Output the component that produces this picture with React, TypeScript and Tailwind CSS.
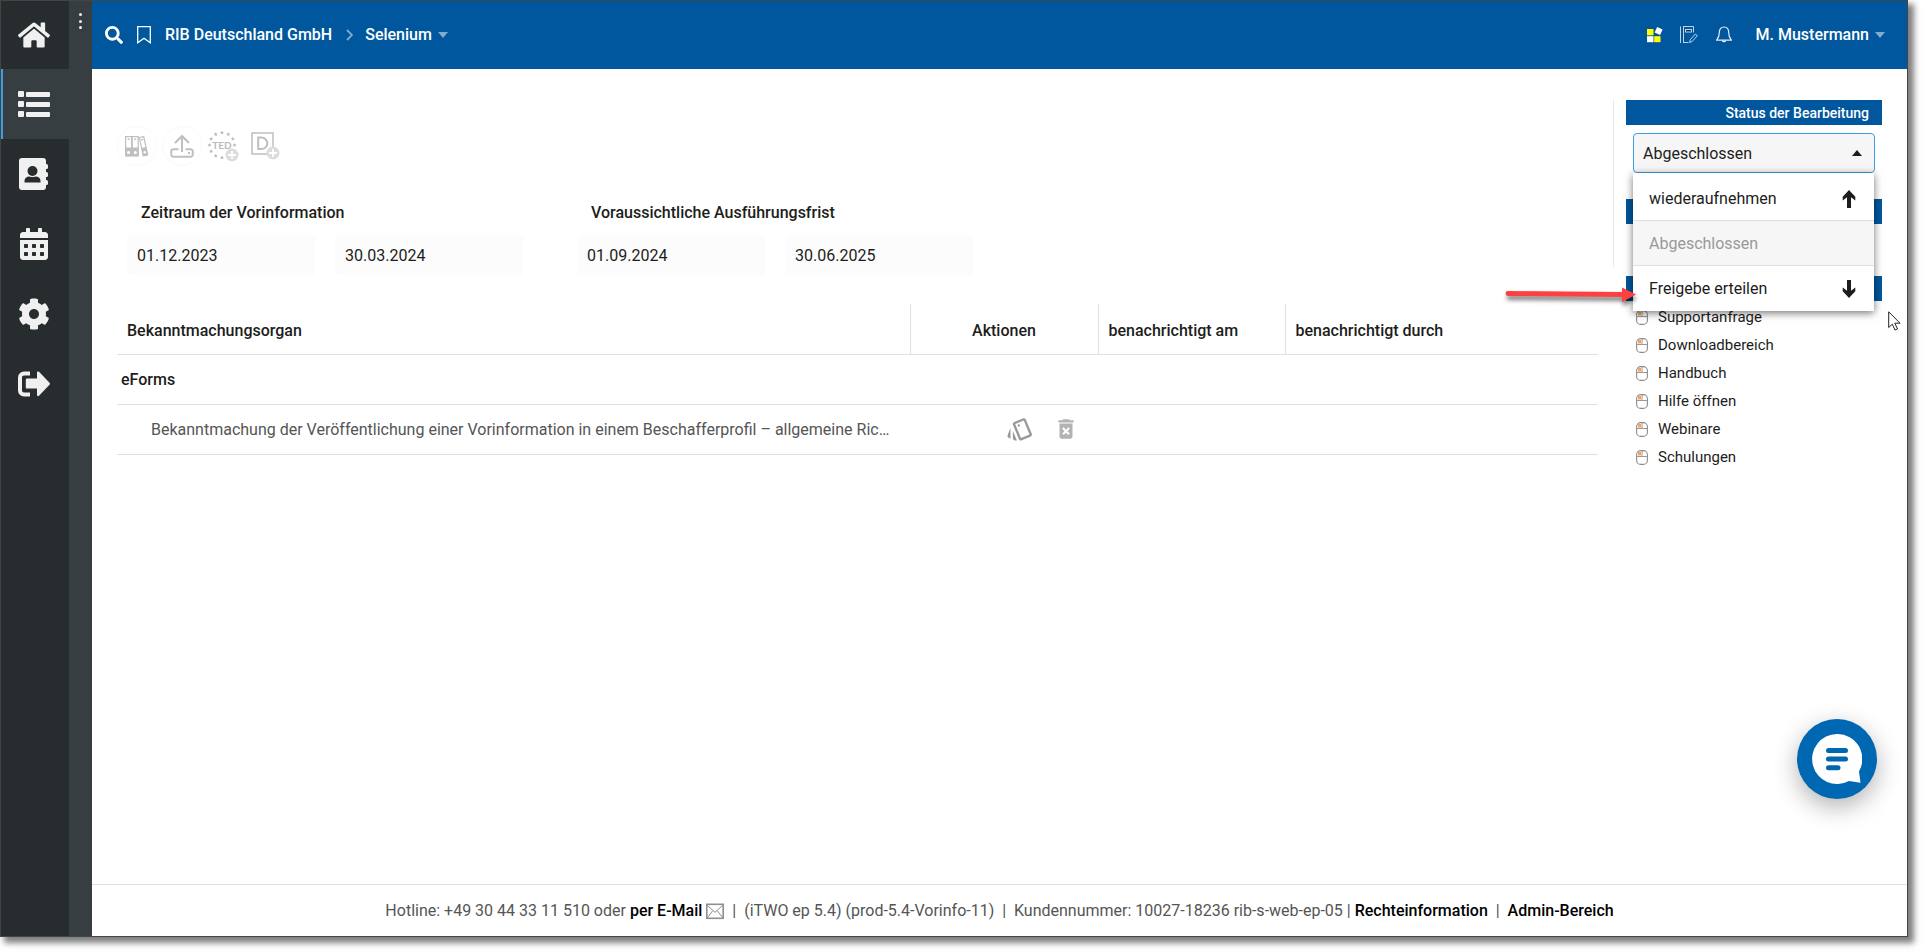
import { useState } from 'react';
import type { ReactNode } from 'react';
import { FaHome, FaCalendarAlt, FaCog, FaSearch } from 'react-icons/fa';
import { MdDeleteForever, MdOutlineStyle } from 'react-icons/md';

/* ---------- Icons ---------- */

function ListIcon() {
  return (
    <svg width="32" height="28" viewBox="0 0 32 28" fill="currentColor">
      {[1, 11, 21].map((y) => (
        <g key={y}>
          <rect x="0" y={y} width="6" height="6" rx="1" />
          <rect x="8" y={y + 1} width="24" height="5" rx="1" />
        </g>
      ))}
    </svg>
  );
}

function ContactsIcon() {
  return (
    <svg width="30" height="32" viewBox="0 0 30 32">
      <rect x="24" y="6" width="5" height="5" rx="1.5" fill="currentColor" />
      <rect x="24" y="14" width="5" height="5" rx="1.5" fill="currentColor" />
      <rect x="24" y="22" width="5" height="5" rx="1.5" fill="currentColor" />
      <rect x="0" y="0" width="27" height="32" rx="3" fill="currentColor" />
      <circle cx="13.5" cy="13" r="5" fill="#272c2e" />
      <path d="M5.500 24.500v-1.500c0-3 2-4.500 5-4.500 2 .8 4 .8 6 0 3 0 5 1.500 5 4.500v1.500z" fill="#272c2e" />
    </svg>
  );
}

function LogoutIcon() {
  return (
    <svg width="32" height="26" viewBox="0 0 32 26">
      <path d="M12 2.500H6a4 4 0 0 0-4 4v13a4 4 0 0 0 4 4h6" fill="none" stroke="currentColor" strokeWidth="4" />
      <path d="M9 7.500h10V1.500c0-1 1.200-1.500 2-.7l10.500 11c.6.700.6 1.400 0 2L21 24.800c-.8.800-2 .3-2-.7v-6.500H9a1.200 1.200 0 0 1-1.200-1.200V8.700A1.200 1.200 0 0 1 9 7.500z" fill="currentColor" />
    </svg>
  );
}

function BookmarkIcon() {
  return (
    <svg width="14" height="18" viewBox="0 0 14 18" fill="none" stroke="currentColor" strokeWidth="1.300">
      <path d="M.7.7h12.600v16L7 12.200.7 16.700z" />
    </svg>
  );
}

function AppsIcon() {
  return (
    <svg width="16" height="16" viewBox="0 0 16 16">
      <rect x="0" y="2" width="6.500" height="6.300" fill="#ffff00" />
      <rect x="0" y="9.200" width="6.500" height="6" fill="#fff" />
      <rect x="7.200" y="9.200" width="6.300" height="6" fill="#ffff00" />
      <rect x="8.600" y="1" width="6" height="6" fill="#fff" transform="rotate(25 11.600 4)" />
    </svg>
  );
}

function NotebookIcon() {
  return (
    <svg width="18" height="18" viewBox="0 0 18 18" fill="none" stroke="#bcd3e8" strokeWidth="1">
      <path d="M.5.500v16.500M3.500 0v17M3.500.500h10v6M3.500 16.500h5" />
      <rect x="5.500" y="3.500" width="6" height="2.500" fill="#00365f" />
      <path d="M9.500 16.500l.8-2.800 5-5.700 2 1.700-5.200 5.800z" />
    </svg>
  );
}

function BellIcon() {
  return (
    <svg width="16" height="18" viewBox="0 0 16 18" fill="none" stroke="#e4edf5" strokeWidth="1.200">
      <path d="M8 1C4.800 1 3.300 3.500 3.300 6.500c0 4-1.200 6-2.600 7.700h14.600c-1.400-1.700-2.600-3.700-2.600-7.700C12.700 3.500 11.200 1 8 1z" />
      <path d="M6.300 14.500a1.800 1.800 0 0 0 3.400 0" />
    </svg>
  );
}

function Caret({ className, up }: { className?: string; up?: boolean }) {
  return (
    <svg width="10" height="6" viewBox="0 0 10 6" fill="currentColor" className={className}>
      <path d={up ? 'M0 6 5 0l5 6z' : 'M0 0h10L5 6z'} />
    </svg>
  );
}

function BinderIcon() {
  return (
    <svg width="24" height="21" viewBox="0 0 24 21">
      <g fill="none" stroke="#bfbfbf" strokeWidth="1.200">
        <rect x=".6" y=".6" width="6" height="19" />
        <rect x="7.200" y=".6" width="6" height="19" />
        <path d="M14.400 1.500l4.300-.9 3.800 18-4.300 1z" />
      </g>
      <g fill="#bfbfbf">
        <path d="M0 11.500h13.500v9H0zM16.300 12l5-1 2 8.500-5.200 1z" />
        <path d="M2.600 2.500h2v1.500h-2zM9.200 2.500h2v1.500h-2zM16 3.200l2-.4.200 1.500-2 .3z" />
      </g>
      <circle cx="3.500" cy="16.500" r="1.500" fill="#fff" />
      <circle cx="10.300" cy="16.500" r="1.500" fill="#fff" />
      <circle cx="19.800" cy="16.300" r="1.300" fill="#fff" />
    </svg>
  );
}

function UploadIcon() {
  return (
    <svg width="24" height="24" viewBox="0 0 24 24" fill="none" stroke="#bfbfbf" strokeWidth="2">
      <path d="M12 18V2M5 9l7-7 7 7" />
      <path d="M8.500 15.200H3.500a2.300 2.300 0 0 0-2.300 2.300v3a2.300 2.300 0 0 0 2.300 2.300h17a2.300 2.300 0 0 0 2.300-2.300v-3a2.300 2.300 0 0 0-2.300-2.300h-5" />
      <path d="M18 19h2" />
    </svg>
  );
}

function PlusBadge({ cx, cy }: { cx: number; cy: number }) {
  return (
    <g>
      <circle cx={cx} cy={cy} r="6.500" fill="#dcdcdc" />
      <path d={`M${cx - 4} ${cy}h8M${cx} ${cy - 4}v8`} stroke="#fff" strokeWidth="1.800" />
    </g>
  );
}

const STAR = 'M0-2 .6-.6 2-.6.9.400 1.300 1.800 0 1-1.300 1.800-.9.400-2-.6-.6-.6z';

function TedIcon() {
  return (
    <svg width="32" height="32" viewBox="0 0 32 32">
      {Array.from({ length: 12 }).map((_, i) => {
        const a = (i * Math.PI) / 6;
        return i === 4 ? null : (
          <path
            key={i}
            d={STAR}
            fill="#b5b5b5"
            transform={`translate(${15 + 12.5 * Math.sin(a)} ${15 - 12.5 * Math.cos(a)})`}
          />
        );
      })}
      <text x="15" y="18.500" textAnchor="middle" fontSize="10" fontWeight="700" fill="#bababa" className="font-['Lato',sans-serif]">
        TED
      </text>
      <PlusBadge cx={25} cy={25} />
    </svg>
  );
}

function DIcon() {
  return (
    <svg width="29" height="28" viewBox="0 0 29 28">
      <rect x="1" y="1" width="21" height="21" fill="none" stroke="#bfbfbf" strokeWidth="1.500" />
      <path d="M7.200 5.500h3.300a5.800 5.800 0 0 1 0 11.600H7.200z" fill="none" stroke="#bfbfbf" strokeWidth="2" />
      <PlusBadge cx={22} cy={21} />
    </svg>
  );
}

function MouseIcon() {
  return (
    <svg width="12" height="15" viewBox="0 0 12 15" className="shrink-0">
      <rect x="2" y="2" width="3" height="3.500" fill="#f6a35c" />
      <rect x=".6" y=".6" width="10.800" height="13.800" rx="4" fill="none" stroke="#8c8c8c" strokeWidth="1.100" />
      <path d="M.6 6.500h10.800M6 .6v6" stroke="#999" strokeWidth="1" />
    </svg>
  );
}

function BoldArrow({ down }: { down?: boolean }) {
  return (
    <svg width="14" height="18" viewBox="0 0 14 18" className={down ? 'rotate-180' : ''}>
      <path d="M7 0l6.300 6.800v3.600L9 7.300V18H5V7.300L.7 10.400V6.800z" fill="#1d1d1b" />
    </svg>
  );
}

function MailIcon() {
  return (
    <svg width="18" height="17" viewBox="0 0 18 17" fill="none" stroke="#8f8f8f" className="mx-1 inline-block">
      <rect x=".8" y="1.300" width="16.400" height="14" strokeWidth="1.600" />
      <path d="M1.500 2.500 9 9.300l7.500-6.800M1.500 14.500l5-6.500M16.500 14.500l-5-6.500" />
    </svg>
  );
}

/* ---------- Data ---------- */

const navItems: { label: string; icon: ReactNode; active?: boolean }[] = [
  { label: 'Start', icon: <FaHome size={32} /> },
  { label: 'Liste', icon: <ListIcon />, active: true },
  { label: 'Kontakte', icon: <ContactsIcon /> },
  { label: 'Kalender', icon: <FaCalendarAlt size={32} /> },
  { label: 'Einstellungen', icon: <FaCog size={32} /> },
  { label: 'Abmelden', icon: <LogoutIcon /> },
];

const periods = [
  { title: 'Zeitraum der Vorinformation', id: 'vorinfo', values: ['01.12.2023', '30.03.2024'] },
  { title: 'Voraussichtliche Ausführungsfrist', id: 'frist', values: ['01.09.2024', '30.06.2025'] },
];

const links = ['Supportanfrage', 'Downloadbereich', 'Handbuch', 'Hilfe öffnen', 'Webinare', 'Schulungen'];

/* ---------- Sections ---------- */

function Sidebar() {
  return (
    <nav className="flex shrink-0 bg-[#363e41]">
      <div className="flex w-[68px] flex-col bg-[#272c2e]">
        {navItems.map((item) => (
          <a
            key={item.label}
            href="#"
            aria-label={item.label}
            className={`flex h-[70px] items-center justify-center border-l-2 pr-1 text-[#f0f0f0] first:h-[68px] ${
              item.active ? 'border-[#3a9fe0] bg-[#363e41]' : 'border-transparent'
            }`}
          >
            {item.icon}
          </a>
        ))}
      </div>
      <div className="flex w-[23px] justify-center pt-3">
        <button aria-label="Menü" className="flex h-4 flex-col items-center justify-between text-[#f0f0f0]">
          <span className="size-[3px] rounded-full bg-current" />
          <span className="size-[3px] rounded-full bg-current" />
          <span className="size-[3px] rounded-full bg-current" />
        </button>
      </div>
    </nav>
  );
}

function TopBar() {
  return (
    <header className="flex h-[68px] shrink-0 items-center justify-between bg-[#00579d] pr-[22px] pl-[13px] font-medium text-white">
      <div className="flex items-center">
        <button aria-label="Suchen" className="mr-3.5">
          <FaSearch size={18} />
        </button>
        <button aria-label="Lesezeichen" className="mr-3.5">
          <BookmarkIcon />
        </button>
        <a href="#">RIB Deutschland GmbH</a>
        <svg width="7" height="12" viewBox="0 0 7 12" fill="none" stroke="#7fabce" strokeWidth="1.800" className="mr-3 ml-3.5">
          <path d="M1 1l5 5-5 5" />
        </svg>
        <button className="flex items-center gap-1.5">
          Selenium
          <Caret className="text-[#7fabce]" />
        </button>
      </div>
      <div className="flex items-center">
        <button aria-label="Anwendungen" className="mr-[17px]">
          <AppsIcon />
        </button>
        <button aria-label="Notizen" className="mr-[18px]">
          <NotebookIcon />
        </button>
        <button aria-label="Benachrichtigungen" className="mr-6">
          <BellIcon />
        </button>
        <button className="flex items-center gap-1.5">
          M. Mustermann
          <Caret className="text-[#7fabce]" />
        </button>
      </div>
    </header>
  );
}

function Toolbar() {
  return (
    <div className="flex h-10 items-center">
      <button aria-label="Akte" className="mr-[5px] flex size-10 items-center justify-center rounded-full border border-[#fafafa]">
        <BinderIcon />
      </button>
      <button aria-label="Hochladen" className="flex size-10 items-center justify-center rounded-full border border-[#fafafa]">
        <UploadIcon />
      </button>
      <button aria-label="TED hinzufügen" className="mr-3 ml-[5px]">
        <TedIcon />
      </button>
      <button aria-label="D hinzufügen">
        <DIcon />
      </button>
    </div>
  );
}

function Periods() {
  return (
    <div className="mt-[35px] flex gap-[54px] pl-2.5">
      {periods.map((period) => (
        <fieldset key={period.id}>
          <legend className="mb-2.5 pl-3.5 font-medium">{period.title}</legend>
          <div className="flex gap-5">
            {period.values.map((value, i) => (
              <input
                key={value}
                type="text"
                aria-label={`${period.title} ${i === 0 ? 'von' : 'bis'}`}
                defaultValue={value}
                className="h-10 w-[188px] rounded-sm bg-[#fcfcfc] px-2.5"
              />
            ))}
          </div>
        </fieldset>
      ))}
    </div>
  );
}

function Organs() {
  return (
    <table className="mt-[29px] w-full table-fixed border-collapse text-left">
      <colgroup>
        <col />
        <col className="w-[188px]" />
        <col className="w-[187px]" />
        <col className="w-[313px]" />
      </colgroup>
      <thead>
        <tr className="h-[50px] border-b border-[#e0e0e0]">
          <th className="px-2.5 pt-1 font-medium">Bekanntmachungsorgan</th>
          <th className="border-l border-[#e0e0e0] px-2.5 pt-1 text-center font-medium">Aktionen</th>
          <th className="border-l border-[#e0e0e0] px-2.5 pt-1 font-medium">benachrichtigt am</th>
          <th className="border-l border-[#e0e0e0] px-2.5 pt-1 font-medium">benachrichtigt durch</th>
        </tr>
      </thead>
      <tbody>
        <tr className="h-[50px] border-b border-[#e0e0e0]">
          <th colSpan={4} className="px-1 pt-0.5 font-medium">
            eForms
          </th>
        </tr>
        <tr className="h-[50px] border-b border-[#e0e0e0]">
          <td className="pt-0.5 pl-[34px] whitespace-nowrap text-[#555]">
            Bekanntmachung der Veröffentlichung einer Vorinformation in einem Beschafferprofil – allgemeine Ric…
          </td>
          <td>
            <div className="flex items-center justify-end gap-[19px] pr-[19px]">
              <button aria-label="Formulare" className="text-[#999]">
                <MdOutlineStyle size={28} />
              </button>
              <button aria-label="Löschen" className="text-[#b3b3b3]">
                <MdDeleteForever size={26} />
              </button>
            </div>
          </td>
          <td />
          <td />
        </tr>
      </tbody>
    </table>
  );
}

function StatusPanel() {
  const [status, setStatus] = useState('Abgeschlossen');

  return (
    <aside className="w-[269px] shrink-0 pt-[31px]">
      <div className="flex">
        <div className="h-[167px] w-[13px] border-l border-[#e8e8e8]" />
        <div className="w-64">
          <h2 className="h-[25px] bg-[#00579d] pr-[13px] text-right text-sm leading-[27px] font-medium text-white">
            Status der Bearbeitung
          </h2>
          <div className="relative mx-[7px] mt-2 mb-[26px]">
            <select
              aria-label="Status der Bearbeitung"
              value={status}
              onChange={(e) => setStatus(e.target.value)}
              className="block h-10 w-full appearance-none rounded-sm border border-[#3a9fe0] bg-[#f6f6f6] px-[9px] pt-0.5 outline-none"
            >
              <option>Abgeschlossen</option>
              <option>wiederaufnehmen</option>
              <option>Freigebe erteilen</option>
            </select>
            <Caret up className="pointer-events-none absolute top-[17px] right-[13px] text-[#1d1d1b]" />
            <ul className="absolute top-10 right-px left-0 z-10 bg-white pt-0.5 shadow-[0_2px_8px_rgba(0,0,0,0.55)]">
              <li className="border-b border-[#e0e0e0]">
                <button className="flex h-[45px] w-full items-center justify-between pt-0.5 pr-[18px] pl-4">
                  wiederaufnehmen <BoldArrow />
                </button>
              </li>
              <li className="border-b border-[#e0e0e0] bg-[#f6f6f6]">
                <button disabled className="flex h-11 w-full items-center px-4 pt-0.5 text-[#999]">
                  Abgeschlossen
                </button>
              </li>
              <li>
                <button className="flex h-[45px] w-full items-center justify-between pr-[18px] pl-4">
                  Freigebe erteilen <BoldArrow down />
                </button>
              </li>
            </ul>
            {/* red pointer towards the last menu entry */}
            <svg
              width="132"
              height="24"
              viewBox="0 0 132 24"
              className="pointer-events-none absolute top-[149px] -left-[128px] z-20 drop-shadow-[1px_4px_2px_rgba(0,0,0,0.5)]"
            >
              <path d="M3 11.500 118 12.500" stroke="#ff4040" strokeWidth="5" strokeLinecap="round" />
              <path d="M117 5.500 131 12.500 117 20z" fill="#ff4040" />
            </svg>
          </div>
          <div className="h-[25px] bg-[#00579d]" />
        </div>
      </div>
      <div className="mt-[9px] ml-[13px] h-[25px] bg-[#00579d]" />
      <ul className="mt-0.5 ml-[23px] text-[15px]">
        {links.map((link) => (
          <li key={link}>
            <a href="#" className="flex h-7 items-center gap-2.5">
              <MouseIcon />
              {link}
            </a>
          </li>
        ))}
      </ul>
    </aside>
  );
}

function Footer() {
  return (
    <footer className="flex h-[52px] shrink-0 items-center justify-center border-t border-[#e0e0e0] whitespace-pre text-[#555]">
      <p>
        Hotline: +49 30 44 33 11 510 oder{' '}
        <a href="#" className="font-medium text-black">
          per E-Mail
        </a>
        <MailIcon />
        {' |  (iTWO ep 5.4) (prod-5.4-Vorinfo-11)  |  Kundennummer: 10027-18236 rib-s-web-ep-05 | '}
        <a href="#" className="font-medium text-black">
          Rechteinformation
        </a>
        {'  |  '}
        <a href="#" className="font-medium text-black">
          Admin-Bereich
        </a>
      </p>
    </footer>
  );
}

export default function App() {
  return (
    <div className="h-screen overflow-hidden bg-white pr-[15px] pb-[15px] font-['Roboto',sans-serif] text-base text-[#1d1d1b]">
      <div className="relative flex h-full border border-[#444] bg-white shadow-[5px_5px_6px_1px_rgba(0,0,0,0.5)]">
        <Sidebar />
        <div className="flex min-w-0 flex-1 flex-col">
          <TopBar />
          <div className="flex min-h-0 flex-1 pr-[25px]">
            <main className="min-w-0 flex-1 pt-[57px] pr-[15px] pl-[25px]">
              <Toolbar />
              <Periods />
              <Organs />
            </main>
            <StatusPanel />
          </div>
          <Footer />
        </div>

        <button
          aria-label="Chat öffnen"
          className="absolute right-[30px] bottom-[137px] flex size-20 items-center justify-center rounded-full bg-[#0067b3] shadow-[0_8px_24px_rgba(0,0,0,0.3)]"
        >
          <svg width="50" height="50" viewBox="0 0 50 50">
            <path d="M25 0a25 25 0 1 0 12 47l11.500 1.800L47 37.500A25 25 0 0 0 25 0z" fill="#fff" />
            <path d="M16.500 16.500h17M16.500 25h17M16.500 33.800h9.500" stroke="#0067b3" strokeWidth="5" strokeLinecap="round" />
          </svg>
        </button>

        {/* mouse pointer */}
        <svg width="13" height="20" viewBox="0 0 13 20" className="pointer-events-none absolute top-[310px] right-[6px]">
          <path d="M.7.8v15.700l3.600-3.300 2.700 5.800 2.500-1.100-2.700-5.700h5.200z" fill="#fff" stroke="#222" strokeWidth="1" />
        </svg>
      </div>
    </div>
  );
}
